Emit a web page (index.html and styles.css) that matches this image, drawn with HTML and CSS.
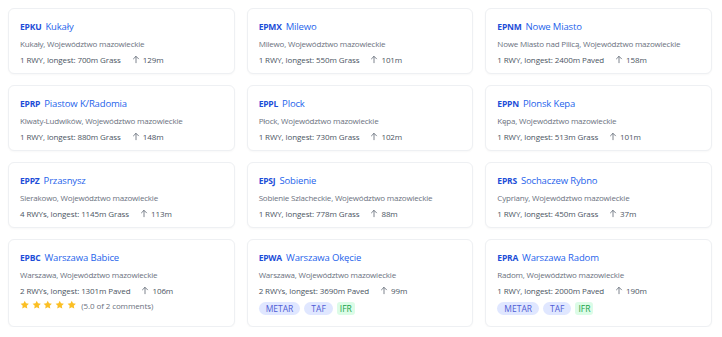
FILE: index.html
```html
<!DOCTYPE html>
<html>
	<head>
		<meta charset="utf-8">
		<link rel="stylesheet" href="styles.css">
	</head>

	<body>
		<div class="airfields">
			<div class="card">
				<div class="name-row"><span class="icao">EPKU</span><a class="name">Kukały</a></div>
				<div class="place">Kukały, Województwo mazowieckie</div>
				<div class="rwy">1 RWY, longest: 700m Grass <span class="elev"><svg viewBox="0 0 10 10"><path d="M5 9.5V1M1.5 4.5L5 1l3.5 3.5"/></svg>129m</span></div>
			</div>
			<div class="card">
				<div class="name-row"><span class="icao">EPMX</span><a class="name">Milewo</a></div>
				<div class="place">Milewo, Województwo mazowieckie</div>
				<div class="rwy">1 RWY, longest: 550m Grass <span class="elev"><svg viewBox="0 0 10 10"><path d="M5 9.5V1M1.5 4.5L5 1l3.5 3.5"/></svg>101m</span></div>
			</div>
			<div class="card">
				<div class="name-row"><span class="icao">EPNM</span><a class="name">Nowe Miasto</a></div>
				<div class="place">Nowe Miasto nad Pilicą, Województwo mazowieckie</div>
				<div class="rwy">1 RWY, longest: 2400m Paved <span class="elev"><svg viewBox="0 0 10 10"><path d="M5 9.5V1M1.5 4.5L5 1l3.5 3.5"/></svg>158m</span></div>
			</div>

			<div class="card">
				<div class="name-row"><span class="icao">EPRP</span><a class="name">Piastow K/Radomia</a></div>
				<div class="place">Klwaty-Ludwików, Województwo mazowieckie</div>
				<div class="rwy">1 RWY, longest: 880m Grass <span class="elev"><svg viewBox="0 0 10 10"><path d="M5 9.5V1M1.5 4.5L5 1l3.5 3.5"/></svg>148m</span></div>
			</div>
			<div class="card">
				<div class="name-row"><span class="icao">EPPL</span><a class="name">Plock</a></div>
				<div class="place">Płock, Województwo mazowieckie</div>
				<div class="rwy">1 RWY, longest: 730m Grass <span class="elev"><svg viewBox="0 0 10 10"><path d="M5 9.5V1M1.5 4.5L5 1l3.5 3.5"/></svg>102m</span></div>
			</div>
			<div class="card">
				<div class="name-row"><span class="icao">EPPN</span><a class="name">Plonsk Kepa</a></div>
				<div class="place">Kępa, Województwo mazowieckie</div>
				<div class="rwy">1 RWY, longest: 513m Grass <span class="elev"><svg viewBox="0 0 10 10"><path d="M5 9.5V1M1.5 4.5L5 1l3.5 3.5"/></svg>101m</span></div>
			</div>

			<div class="card">
				<div class="name-row"><span class="icao">EPPZ</span><a class="name">Przasnysz</a></div>
				<div class="place">Sierakowo, Województwo mazowieckie</div>
				<div class="rwy">4 RWYs, longest: 1145m Grass <span class="elev"><svg viewBox="0 0 10 10"><path d="M5 9.5V1M1.5 4.5L5 1l3.5 3.5"/></svg>113m</span></div>
			</div>
			<div class="card">
				<div class="name-row"><span class="icao">EPSJ</span><a class="name">Sobienie</a></div>
				<div class="place">Sobienie Szlacheckie, Województwo mazowieckie</div>
				<div class="rwy">1 RWY, longest: 778m Grass <span class="elev"><svg viewBox="0 0 10 10"><path d="M5 9.5V1M1.5 4.5L5 1l3.5 3.5"/></svg>88m</span></div>
			</div>
			<div class="card">
				<div class="name-row"><span class="icao">EPRS</span><a class="name">Sochaczew Rybno</a></div>
				<div class="place">Cypriany, Województwo mazowieckie</div>
				<div class="rwy">1 RWY, longest: 450m Grass <span class="elev"><svg viewBox="0 0 10 10"><path d="M5 9.5V1M1.5 4.5L5 1l3.5 3.5"/></svg>37m</span></div>
			</div>

			<div class="card">
				<div class="name-row"><span class="icao">EPBC</span><a class="name">Warszawa Babice</a></div>
				<div class="place">Warszawa, Województwo mazowieckie</div>
				<div class="rwy">2 RWYs, longest: 1301m Paved <span class="elev"><svg viewBox="0 0 10 10"><path d="M5 9.5V1M1.5 4.5L5 1l3.5 3.5"/></svg>106m</span></div>
				<div class="rating">
					<span class="stars">
						<svg viewBox="0 0 20 20"><path d="M10 1.5l2.6 5.6 6.1.7-4.5 4.2 1.2 6-5.4-3-5.4 3 1.2-6-4.5-4.2 6.1-.7z"/></svg>
						<svg viewBox="0 0 20 20"><path d="M10 1.5l2.6 5.6 6.1.7-4.5 4.2 1.2 6-5.4-3-5.4 3 1.2-6-4.5-4.2 6.1-.7z"/></svg>
						<svg viewBox="0 0 20 20"><path d="M10 1.5l2.6 5.6 6.1.7-4.5 4.2 1.2 6-5.4-3-5.4 3 1.2-6-4.5-4.2 6.1-.7z"/></svg>
						<svg viewBox="0 0 20 20"><path d="M10 1.5l2.6 5.6 6.1.7-4.5 4.2 1.2 6-5.4-3-5.4 3 1.2-6-4.5-4.2 6.1-.7z"/></svg>
						<svg viewBox="0 0 20 20"><path d="M10 1.5l2.6 5.6 6.1.7-4.5 4.2 1.2 6-5.4-3-5.4 3 1.2-6-4.5-4.2 6.1-.7z"/></svg>
					</span>
					<span class="comments">(5.0 of 2 comments)</span>
				</div>
			</div>
			<div class="card">
				<div class="name-row"><span class="icao">EPWA</span><a class="name">Warszawa Okęcie</a></div>
				<div class="place">Warszawa, Województwo mazowieckie</div>
				<div class="rwy">2 RWYs, longest: 3690m Paved <span class="elev"><svg viewBox="0 0 10 10"><path d="M5 9.5V1M1.5 4.5L5 1l3.5 3.5"/></svg>99m</span></div>
				<div class="tags">
					<span class="tag">METAR</span>
					<span class="tag">TAF</span>
					<span class="tag ifr">IFR</span>
				</div>
			</div>
			<div class="card">
				<div class="name-row"><span class="icao">EPRA</span><a class="name">Warszawa Radom</a></div>
				<div class="place">Radom, Województwo mazowieckie</div>
				<div class="rwy">1 RWY, longest: 2000m Paved <span class="elev"><svg viewBox="0 0 10 10"><path d="M5 9.5V1M1.5 4.5L5 1l3.5 3.5"/></svg>190m</span></div>
				<div class="tags">
					<span class="tag">METAR</span>
					<span class="tag">TAF</span>
					<span class="tag ifr">IFR</span>
				</div>
			</div>
		</div>
	</body>
</html>
```

FILE: styles.css
```css
body {
	margin: 0;
	background: #ffffff;
	font-family: "Open Sans", "Noto Sans", sans-serif;
}

.airfields {
	display: grid;
	grid-template-columns: repeat(3, 1fr);
	gap: 11px 12px;
	margin: 8px 10px 0 8px;
}

.card {
	padding: 10px 11px 6px;
	border: 1px solid #eef0f3;
	border-radius: 6px;
	background: white;
	box-shadow: 0 1px 2px rgba(0, 0, 0, 0.03);
}

.name-row {
	display: flex;
	align-items: baseline;
	gap: 4px;
	height: 16px;
	line-height: 16px;
}

.icao {
	font-size: 8.5px;
	font-weight: 700;
	letter-spacing: -0.2px;
	color: #1d4ed8;
}

.name {
	font-size: 9.5px;
	letter-spacing: -0.15px;
	color: #2563eb;
}

.place {
	margin-top: 2px;
	font-size: 8px;
	letter-spacing: -0.2px;
	line-height: 14px;
	color: #6b7280;
}

.rwy {
	margin-top: 1px;
	font-size: 8px;
	letter-spacing: -0.1px;
	line-height: 15px;
	color: #4b5563;
}

.elev {
	margin-left: 9px;
}

.elev svg {
	width: 8px;
	height: 9px;
	margin-right: 3px;
	vertical-align: -1px;
	fill: none;
	stroke: #4b5563;
	stroke-width: 0.9;
}

.rating {
	display: flex;
	align-items: center;
	gap: 5px;
	height: 14px;
	margin-top: 0;
	margin-bottom: 8px;
}

.stars {
	display: flex;
	gap: 2.2px;
}

.stars svg {
	width: 9.5px;
	height: 9.5px;
	fill: #fbbf24;
}

.comments {
	font-size: 8px;
	letter-spacing: -0.1px;
	color: #6b7280;
}

.tags {
	display: flex;
	gap: 4px;
	margin-top: 4px;
	margin-bottom: 4px;
}

.tag {
	padding: 0 7px;
	line-height: 13px;
	font-size: 8.5px;
	color: #4f5bd5;
	background: #e0e7ff;
	border-radius: 7px;
}

.tag.ifr {
	padding: 0 3px;
	color: #16a34a;
	background: #dcfce7;
	border-radius: 3px;
}
```
